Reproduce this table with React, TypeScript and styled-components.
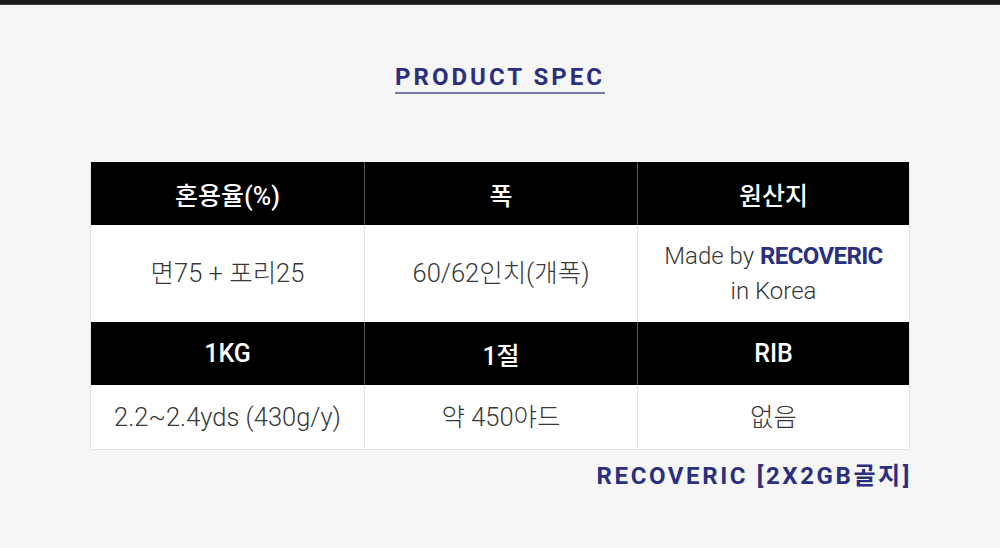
import styled, { createGlobalStyle } from 'styled-components';

const GlobalStyle = createGlobalStyle`
    html, body {
        margin: 0;
        padding: 0;
        background: #f6f6f6;
        font-family: Roboto, "Noto Sans CJK KR", sans-serif;
    }
`;

const NAVY = '#2b2f7f';

const rows = [
    { head: ['혼용율(%)', '폭', '원산지'], body: ['면75 + 포리25', '60/62인치(개폭)', 'origin'], tall: true },
    { head: ['1KG', '1절', 'RIB'], body: ['2.2~2.4yds (430g/y)', '약 450야드', '없음'], tall: false },
];

const App = () => {
    return (
        <Page>
            <GlobalStyle />
            <TopBar />
            <Content>
                <Title>PRODUCT SPEC</Title>
                <SpecTable>
                    {rows.map((row, i) => (
                        <Group key={i}>
                            {row.head.map((h) => (
                                <HeadCell key={h}>{h}</HeadCell>
                            ))}
                            {row.body.map((b) => (
                                <BodyCell key={b} $tall={row.tall}>
                                    {b === 'origin' ? (
                                        <Origin>
                                            Made by <Brand>RECOVERIC</Brand>
                                            <br />
                                            in Korea
                                        </Origin>
                                    ) : (
                                        b
                                    )}
                                </BodyCell>
                            ))}
                        </Group>
                    ))}
                </SpecTable>
                <Caption>RECOVERIC [2X2GB골지]</Caption>
            </Content>
        </Page>
    );
};

const Page = styled.div`
    width: 1000px;
    height: 548px;
    overflow: hidden;
    background: #f6f6f6;
`;

const TopBar = styled.div`
    height: 4px;
    background: #1b1c1e;
    border-bottom: 1px solid #3a3b3d;
`;

const Content = styled.div`
    display: flex;
    flex-direction: column;
    align-items: center;
    padding: 58px 90px 0;
`;

const Title = styled.h2`
    margin: 0;
    font-size: 24px;
    font-weight: 700;
    letter-spacing: 3px;
    color: ${NAVY};
    line-height: 28px;
    padding-bottom: 1px;
    border-bottom: 2px solid #7679ae;
`;

const SpecTable = styled.div`
    margin-top: 68px;
    width: 820px;
    border: 1px solid #e3e3e3;
    border-top: none;
    box-sizing: border-box;
    background: #fff;
`;

const Group = styled.div`
    display: grid;
    grid-template-columns: 273px 273px 1fr;
`;

const HeadCell = styled.div`
    height: 63px;
    background: #000;
    color: #fff;
    display: flex;
    align-items: center;
    justify-content: center;
    font-size: 25px;
    font-weight: 500;
    & + & {
        border-left: 1px solid #555;
    }
`;

const BodyCell = styled.div<{ $tall: boolean }>`
    height: ${(p) => (p.$tall ? '97px' : '64px')};
    display: flex;
    align-items: center;
    justify-content: center;
    text-align: center;
    color: #383838;
    font-size: 25.5px;
    font-weight: 300;
    line-height: 35px;
    & + & {
        border-left: 1px solid #e3e3e3;
    }
`;

const Origin = styled.span`
    font-size: 24px;
`;

const Brand = styled.b`
    color: ${NAVY};
    font-weight: 700;
    letter-spacing: -0.6px;
`;

const Caption = styled.div`
    align-self: flex-end;
    margin-top: 6px;
    margin-right: -2px;
    font-size: 24px;
    font-weight: 700;
    letter-spacing: 2.6px;
    color: ${NAVY};
`;

export default App;
